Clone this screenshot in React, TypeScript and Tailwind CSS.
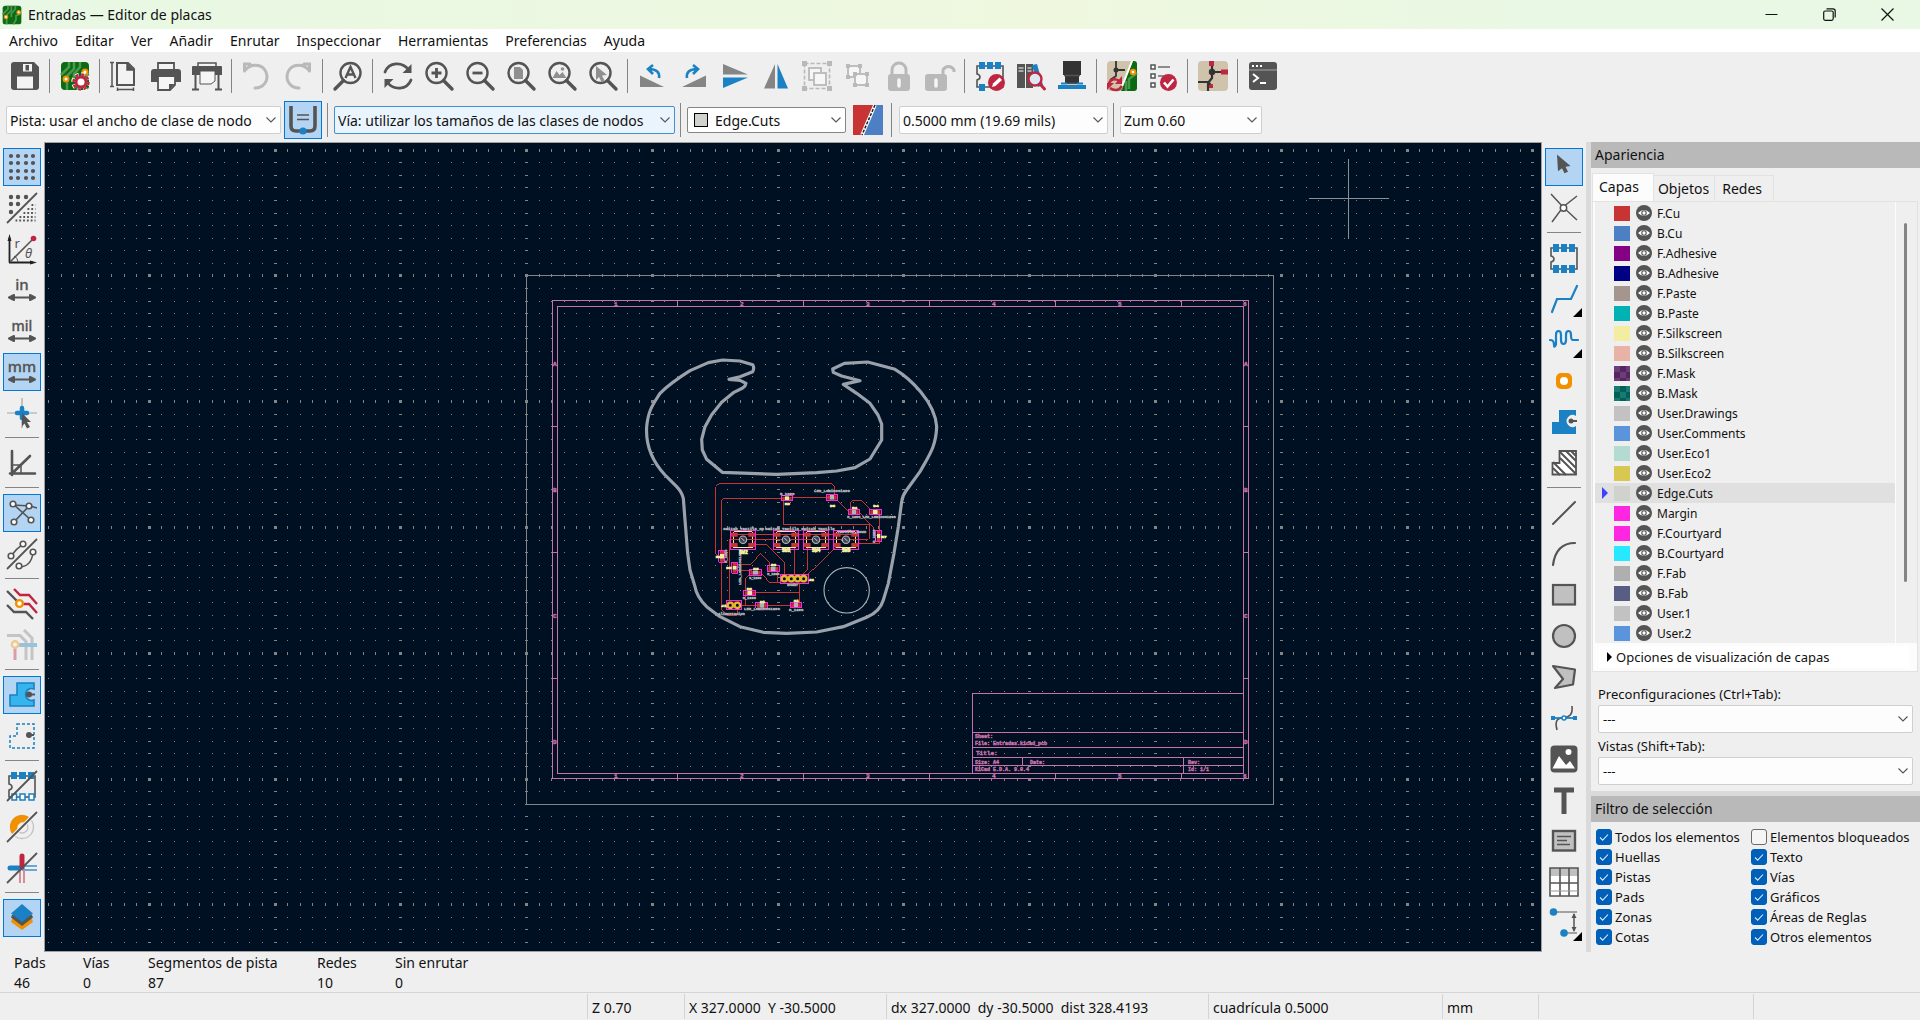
import React, { useState } from 'react';
import type { ReactNode } from 'react';

const G = '#545454';
const B = '#1a81c4';
const R = '#bf2641';
const O = '#f29100';
const D = '#b9b9b9';

const lens = (
  <>
    <circle cx="12.5" cy="12" r="10" fill="none" stroke={G} strokeWidth="2.4" />
    <path d="M19.5 19.5L28 28" stroke={G} strokeWidth="3.4" strokeLinecap="round" />
  </>
);
const arrowH = <path d="M4 22.5h22M7 20l-5 2.5L7 25zM23 20l5 2.5-5 2.5z" stroke={G} strokeWidth="2" fill={G} strokeLinejoin="round" />;
const chip = <path d="M8 5H2v8c4 1 4 5 0 6v7h26V5H8" fill="none" stroke={G} strokeWidth="1.6" />;
const slash = <path d="M1 29L29 1" stroke="#efefef" strokeWidth="4" />;
const slash2 = <path d="M0 30L30 0" stroke={G} strokeWidth="1.8" />;
const word = (s: string) => (
  <text x="15" y="15" textAnchor="middle" fontSize={s === 'mil' ? 14 : 15} fontFamily="Noto Sans" fontWeight="500" fill={G} stroke={G} strokeWidth="0.3">
    {s}
  </text>
);
const board = (
  <>
    <rect x="1" y="1" width="28" height="28" rx="4" fill="#0b6a12" />
    <path d="M9 1v5l-8 8M14 1v7l-7 7v14M20 1v5l-6 7v5M29 13l-8 3v6l-4 7" fill="none" stroke="#48984d" strokeWidth="2.6" />
    <circle cx="6" cy="18" r="2.5" fill="#fff" stroke={O} strokeWidth="2" />
    <circle cx="25" cy="11" r="2.5" fill="#fff" stroke={O} strokeWidth="2" />
  </>
);

const ICONS: Record<string, ReactNode> = {
  save: (
    <>
      <path d="M4 1h20l5 5v20a3 3 0 0 1-3 3H4a3 3 0 0 1-3-3V4a3 3 0 0 1 3-3z" fill={G} />
      <path d="M7 15.500h16v12H7zM13 3h9v7.500h-9z" fill="#f4f4f4" />
      <path d="M15.500 4h3.500v5.500h-3.500z" fill={G} />
    </>
  ),
  setup: (
    <>
      {board}
      <circle cx="21" cy="21" r="7.500" fill="none" stroke="#fff" strokeWidth="4.500" strokeDasharray="3.400 2.490" />
      <circle cx="21" cy="21" r="5" fill="#fff" stroke={R} strokeWidth="3" />
      <circle cx="21" cy="21" r="7.500" fill="none" stroke={R} strokeWidth="2.600" strokeDasharray="3 2.890" />
    </>
  ),
  page: (
    <>
      <path d="M7 2h11l6 6v16H7z" fill="#f3f3f3" stroke={G} strokeWidth="2" />
      <path d="M17 2v7h7" fill={G} stroke={G} strokeWidth="1.500" />
      <path d="M2 1v25M0 1.500h4M0 25.500h4M7 28.500h17M7.500 26.500v3.500M23.500 26.500v3.500" stroke={G} strokeWidth="1.500" />
    </>
  ),
  print: (
    <>
      <path d="M7 8V2h16v6" fill="#f3f3f3" stroke={G} strokeWidth="1.800" />
      <path d="M3 8h24a3 3 0 0 1 3 3v10H0V11a3 3 0 0 1 3-3z" fill={G} />
      <path d="M7 15h17v9l-5 5H7z" fill="#f6f6f6" stroke={G} strokeWidth="1.800" />
      <path d="M24 23h-6v6z" fill={G} />
    </>
  ),
  plot: (
    <>
      <path d="M6 5V2h18v3" fill="#f3f3f3" stroke={G} strokeWidth="1.500" />
      <path d="M1 5h28a1 1 0 0 1 1 1v8H0V6a1 1 0 0 1 1-1z" fill={G} />
      <path d="M8 10h15v10l-4 3H8z" fill="#f6f6f6" stroke={G} strokeWidth="1" />
      <path d="M3.500 13v15M26.500 13v15M0 28.500h7M23 28.500h7" stroke={G} strokeWidth="2" />
    </>
  ),
  undo: <path d="M9 3H3.500v7M4 9.500C9 2.500 21 2 25 11c3.500 9-3 16-11 16" fill="none" stroke={D} strokeWidth="3" strokeLinecap="round" transform="translate(-1 0)" />,
  redo: <path d="M21 3h5.500v7M26 9.500C21 2.500 9 2 5 11c-3.500 9 3 16 11 16" fill="none" stroke={D} strokeWidth="3" strokeLinecap="round" />,
  find: (
    <>
      <circle cx="17.500" cy="12" r="10" fill="none" stroke={G} strokeWidth="2.400" />
      <path d="M10.500 19.500L2 28" stroke={G} strokeWidth="3.400" strokeLinecap="round" />
      <path d="M12.500 17l5-11 5 11M14.500 13.500h6" fill="none" stroke={G} strokeWidth="2.400" />
    </>
  ),
  refresh: (
    <>
      <path d="M2 11C6 1 19 0 26 9M28 19C24 29 11 30 4 21" fill="none" stroke={G} strokeWidth="2.800" strokeLinecap="round" />
      <path d="M28.500 3v9h-9zM1.500 27v-9h9z" fill={G} />
    </>
  ),
  zin: <>{lens}<path d="M12.500 7v10M7.500 12h10" stroke={G} strokeWidth="2.800" /></>,
  zout: <>{lens}<path d="M7.500 12h10" stroke={G} strokeWidth="2.800" /></>,
  zfit: <>{lens}<path d="M8 6h6l3 3v9H8z" fill="#8f8f8f" /></>,
  zobj: <>{lens}<path d="M5.500 17l4-7 3 4 3-3 4 6z" fill="#8f8f8f" /><circle cx="15.500" cy="8" r="1.800" fill="#8f8f8f" /></>,
  zsel: <>{lens}<path d="M8 5l11 9-5 .5 2.500 5-3 1.500-2.500-5-3 3z" fill="#8f8f8f" /></>,
  ccw: <><path d="M2 14.500v11.500h24z" fill="#858585" /><path d="M21 17c1-6-3-9-10-9M15 4l-5 4 5 5" fill="none" stroke={B} strokeWidth="2.600" /></>,
  cw: <><path d="M27 14.500v11.500H3z" fill="#858585" /><path d="M8 17c-1-6 3-9 10-9M14 4l5 4-5 5" fill="none" stroke={B} strokeWidth="2.600" /></>,
  flipv: <><path d="M3 3v10.500h25z" fill="#858585" /><path d="M3 27V16.500h25z" fill={B} /></>,
  fliph: <><path d="M3 27.500h11V3z" fill="#858585" /><path d="M27 27.500H16.500V3z" fill={B} /></>,
  group: (
    <>
      <rect x="2.500" y="2.500" width="25" height="25" fill="none" stroke={D} strokeWidth="1.600" strokeDasharray="4 2" />
      <path d="M0 0h5v5H0zM25 0h5v5h-5zM0 25h5v5H0zM25 25h5v5h-5z" fill={D} />
      <rect x="7" y="7" width="12" height="12" fill="#f6f6f6" stroke={D} strokeWidth="1.800" />
      <rect x="12" y="12" width="12" height="12" fill="#f6f6f6" stroke={D} strokeWidth="1.800" />
    </>
  ),
  ungroup: (
    <>
      <rect x="5" y="5" width="12" height="11" fill="#f6f6f6" stroke={D} strokeWidth="1.800" />
      <rect x="12" y="13" width="12" height="11" fill="#f6f6f6" stroke={D} strokeWidth="1.800" />
      <path d="M3 3h4v4H3zM15 3h4v4h-4zM3 14h4v4H3zM10 11h4v4h-4zM22 11h4v4h-4zM10 22h4v4h-4zM22 22h4v4h-4z" fill={D} />
    </>
  ),
  lock: (
    <>
      <path d="M8 14V9a7 7 0 0 1 14 0v5" fill="none" stroke={D} strokeWidth="3" />
      <rect x="4" y="13" width="22" height="17" rx="3" fill={D} />
      <path d="M15 19v6" stroke="#f6f6f6" strokeWidth="3.500" strokeLinecap="round" />
    </>
  ),
  unlock: (
    <>
      <path d="M18 14V9a6 6 0 0 1 11 0v2" fill="none" stroke={D} strokeWidth="3" />
      <rect x="0" y="13" width="22" height="17" rx="3" fill={D} />
      <path d="M11 19v6" stroke="#f6f6f6" strokeWidth="3.500" strokeLinecap="round" />
    </>
  ),
  fpedit: (
    <>
      {chip}
      <path d="M4 1h6v7H4zM12 1h6v7h-6zM20 1h6v7h-6zM4 23h6v7H4z" fill={B} />
      <circle cx="21.500" cy="21.500" r="8.500" fill={R} />
      <path d="M17 26l1-3.500 6.500-6 2.500 2.500-6.500 6z" fill="#fff" />
    </>
  ),
  fplib: (
    <>
      <path d="M1 3h8v24H1zM10 3h7v24h-7z" fill={G} />
      <path d="M2.500 7h5M2.500 10h5M11.500 7h4M11.500 10h4" stroke="#fff" />
      <path d="M16 4l5-1 6 21-5 2z" fill={B} />
      <circle cx="19" cy="18" r="6.500" fill="#dbe9f2" stroke={R} strokeWidth="2.400" />
      <path d="M24 23l4.500 5" stroke={R} strokeWidth="3" strokeLinecap="round" />
    </>
  ),
  view3d: (
    <>
      <path d="M6 0h18v14H6zM8 15h14v7H8z" fill="#333" />
      <path d="M7 14.500h16M10 22.500h10" stroke={G} strokeWidth="1.500" />
      <path d="M1 24h28v4H1z" fill={B} />
      <path d="M4 22.500h6M20 22.500h6" stroke={B} strokeWidth="2" />
    </>
  ),
  update: (
    <>
      <rect x="0" y="0" width="30" height="30" rx="4" fill="#d0c3ab" />
      <path d="M14 30L26 0h1a3 3 0 0 1 3 3v24a3 3 0 0 1-3 3z" fill="#0b6a12" />
      <path d="M22 28V18l8-6M19 30V20" stroke="#48984d" strokeWidth="2.500" fill="none" />
      <path d="M9 0v15l-6 4M9 9h9" stroke="#333" strokeWidth="1.800" fill="none" />
      <circle cx="9" cy="9" r="2.500" fill="#333" />
      <circle cx="26" cy="11" r="2.300" fill="#fff" stroke={O} strokeWidth="2" />
      <path d="M14 28L25 0" stroke="#fff" strokeWidth="2" />
      <path d="M2 23c1-5 6-6 10-3M15 25c-3 5-8 5-12 2" stroke={R} strokeWidth="2.600" fill="none" />
      <path d="M15 15v8H8zM0 29v-7h7z" fill={R} />
    </>
  ),
  drc: (
    <>
      <path d="M3 4h4v4H3zM3 13h4v4H3zM3 22h4v4H3z" fill="#fff" stroke={G} strokeWidth="1.500" />
      <path d="M10 6h12M10 15h7" stroke="#8c8c8c" strokeWidth="2" />
      <circle cx="20.500" cy="21.500" r="8.500" fill={R} />
      <path d="M16 21.500l3.500 4 6-7" stroke="#fff" strokeWidth="2.600" fill="none" />
    </>
  ),
  sch: (
    <>
      <rect x="0" y="0" width="30" height="30" rx="4" fill="#d0c3ab" />
      <path d="M14 5v12l-4 5v8M14 11h10M11 21H0M11 22l3 4" stroke="#333" strokeWidth="2.200" fill="none" />
      <circle cx="14" cy="11" r="3.200" fill="#333" />
      <path d="M11 0h5v5h-5zM23 8.500h7v5h-7zM11 24l4-1v4h-4z" fill={R} />
    </>
  ),
  console: (
    <>
      <rect x="1" y="1" width="28" height="28" rx="3" fill={G} />
      <path d="M1 9h28" stroke="#8b8b8b" strokeWidth="1.500" />
      <path d="M4 5h2M8 5h2M12 5h2" stroke="#fff" strokeWidth="2" />
      <path d="M5 13l5 4-5 4M12 22h6" stroke="#fff" strokeWidth="2" fill="none" />
    </>
  ),
  autotrack: (
    <>
      <path d="M3 1v20q0 5 5 5h14q5 0 5-5V1" fill="none" stroke={G} strokeWidth="3.600" />
      <path d="M9 10h12M9 14.500h12" stroke={G} strokeWidth="1.600" />
      <circle cx="15" cy="26" r="3.600" fill={B} />
    </>
  ),
  swap: (
    <>
      <path d="M0 0h21L8 30H0z" fill="#c83434" />
      <path d="M23 0h7v30H10z" fill="#4d7fc4" />
      <path d="M22 0L9 30" stroke="#fff" strokeWidth="3.500" />
      <path d="M22 0L9 30" stroke="#222" strokeWidth="1.500" strokeDasharray="3 1.500" />
    </>
  ),
  grid: <path d="M4 4h.01M11 4h.01M19 4h.01M26 4h.01M4 11h.01M11 11h.01M19 11h.01M26 11h.01M4 19h.01M11 19h.01M19 19h.01M26 19h.01M4 26h.01M11 26h.01M19 26h.01M26 26h.01" stroke={G} strokeWidth="4.200" strokeLinecap="round" />,
  gridov: (
    <>
      <path d="M4 4h.01M11 4h.01M19 4h.01M4 11h.01M11 11h.01M4 19h.01" stroke={G} strokeWidth="4.400" strokeLinecap="round" />
      <path d="M28 8h.01M24.500 12h4M20.500 16h8M16.500 20h12M12.500 24h16M8.500 27.500h20" stroke={G} strokeWidth="1.800" strokeDasharray="1.800 2" />
      {slash2}
    </>
  ),
  polar: (
    <>
      <path d="M2.500 28.500V4M2 28.500h24" stroke="#222" strokeWidth="1.800" />
      <path d="M2.500 0l2 7h-4zM30 28.500l-7-2v4z" fill="#222" />
      <path d="M3 28L25 6" stroke={G} strokeWidth="1.600" />
      <path d="M7 22q4 2 4 6" stroke={G} fill="none" />
      <circle cx="26.500" cy="4.500" r="2.800" fill={R} />
      <text x="7.500" y="14" fontSize="13" fontFamily="Noto Sans" fill={G}>r</text>
      <text x="18" y="24" fontSize="13" fontFamily="Noto Sans" fontStyle="italic" fill={G}>θ</text>
    </>
  ),
  inch: <>{word('in')}{arrowH}</>,
  mil: <>{word('mil')}{arrowH}</>,
  mm: <>{word('mm')}{arrowH}</>,
  cursor: (
    <>
      <path d="M15 0v30M0 15h30" stroke="#a5a5a5" strokeWidth="1.200" />
      <path d="M15 10v10M10 15h10" stroke={B} strokeWidth="4.500" strokeLinecap="round" />
      <path d="M15 15l9 9h-4l3 5-3 1.500-2.500-5-2.500 3z" fill={G} />
    </>
  ),
  angle: <><path d="M5 3v24M3 25.500h25M5 25.500L23 8" stroke={G} strokeWidth="2.600" strokeLinecap="round" /><path d="M5 17h9v9" fill="none" stroke={G} strokeWidth="1.500" /></>,
  rats: (
    <>
      <path d="M6 6l18 16M22 8L7 24M6 7l17 1 7 2" stroke={G} strokeWidth="1.600" fill="none" />
      <g fill="#fff" stroke={G} strokeWidth="1.600"><circle cx="6" cy="6" r="2.800" /><circle cx="22" cy="8" r="2.800" /><circle cx="7" cy="24" r="2.800" /><circle cx="24" cy="22" r="2.800" /></g>
    </>
  ),
  ratcurve: (
    <>
      <path d="M4 18q5-9 12-12M12 28q12 0 14-14" stroke={G} strokeWidth="1.600" fill="none" />
      <g fill="#fff" stroke={G} strokeWidth="1.600"><circle cx="16" cy="5" r="2.800" /><circle cx="4" cy="17" r="2.800" /><circle cx="26" cy="13" r="2.800" /><circle cx="12" cy="27" r="2.800" /></g>
      {slash2}
    </>
  ),
  netcolor: (
    <>
      <path d="M0 2l10 10M0 16l7 7h12l7 7" stroke={G} strokeWidth="2.400" fill="none" />
      <path d="M7 0l6 6h9l8 9M13 15h9l8 9" stroke={R} strokeWidth="2.400" fill="none" />
      <circle cx="12.500" cy="14.500" r="3.400" fill="#fff" stroke={O} strokeWidth="2.400" />
    </>
  ),
  contrast: (
    <g opacity="0.4">
      <path d="M0 5.500h13l6 6V30M17 0l8 8v22" stroke="#858585" strokeWidth="3" fill="none" />
      <path d="M8 15h22" stroke={B} strokeWidth="4" />
      <path d="M8 17v13" stroke={R} strokeWidth="3" />
      <circle cx="8" cy="14.500" r="3.200" fill="#fff" stroke={O} strokeWidth="2.400" />
    </g>
  ),
  zonefill: (
    <>
      <path d="M10 3h17v6a6 6 0 1 0 0 11v6H3V15h7z" fill="#35b4ed" stroke={B} strokeWidth="1.600" />
      <circle cx="22" cy="14.500" r="3" fill={G} /><path d="M22 14.500h6" stroke={G} strokeWidth="2" />
    </>
  ),
  zoneout: (
    <>
      <path d="M10 3h17v24H3V15h7z" fill="none" stroke={B} strokeWidth="1.500" strokeDasharray="3 2" />
      <circle cx="22" cy="14" r="3" fill={G} /><path d="M22 14h5" stroke={G} strokeWidth="2" />
    </>
  ),
  padsk: (
    <>
      {chip}
      <path d="M4 1h6v7H4zM12 1h7v7h-7zM21 1h6v7h-6z" fill={B} />
      <path d="M5 23h4.500v6H5zM13 23h5v6h-5zM22 23h5v6h-5z" fill="#fff" stroke={B} strokeWidth="1.500" />
      {slash2}
    </>
  ),
  viask: (
    <>
      <circle cx="15" cy="15" r="11.500" fill="none" stroke="#c2c2c2" strokeWidth="1.300" />
      <circle cx="15" cy="15" r="6" fill="none" stroke="#c2c2c2" strokeWidth="1.300" />
      <path d="M6.500 23.500a12 12 0 0 1 17-17l-5 5a5 5 0 0 0-7 7z" fill={O} />
      {slash}{slash2}
    </>
  ),
  tracksk: (
    <>
      <path d="M13 15v15M17 15v15" stroke="#d77f8f" strokeWidth="1.800" />
      <path d="M15 13h15M15 17h15" stroke="#66a9d6" strokeWidth="1.800" />
      <path d="M3 15h10" stroke={B} strokeWidth="5" strokeLinecap="round" />
      <path d="M15 3v11" stroke={R} strokeWidth="5" strokeLinecap="round" />
      {slash2}
    </>
  ),
  layers: (
    <>
      <path d="M4 19l11 8 11-8-1-3H5z" fill={O} />
      <path d="M4 14.500l11 8.500 11-8.500-1-2.500H5z" fill={G} />
      <path d="M15 1l11 9.500-11 8.500L4 10.500z" fill={B} />
    </>
  ),
  select: <path d="M8 2.500L21.500 14l-5 .8 2.500 5-3.500 1.500-2.500-5-4 3z" fill={G} />,
  hilite: <><path d="M2 1l12 13L28 3M3 29l11-15 14 13" fill="none" stroke={G} strokeWidth="1.500" /><circle cx="14.500" cy="15" r="3.200" fill="#fff" stroke={G} strokeWidth="1.500" /></>,
  footprint: <>{chip}<path d="M4 1h6v8H4zM12 1h6v8h-6zM20 1h6v8h-6zM4 22h6v8H4zM12 22h6v8h-6zM20 22h6v8h-6z" fill={B} /></>,
  track: <path d="M3 28l5-13h14l6-13" fill="none" stroke={B} strokeWidth="2.200" strokeLinecap="round" />,
  tune: <path d="M1 15q4 0 4 4.500t2 0V10q0-4 2.500-4t2.500 4v5q0 4 2.500 4T17 15v-5q0-4 2.500-4T22 10q0 5 2 5h5" fill="none" stroke={B} strokeWidth="2.200" strokeLinecap="round" />,
  via: <><rect x="7" y="7" width="16" height="16" rx="5" fill={O} /><circle cx="15" cy="15" r="4" fill="#fff" /></>,
  zone: <><path d="M10 3h17v6a6 6 0 1 0 0 10v8H3V15h7z" fill={B} /><circle cx="22" cy="14" r="2.500" fill={G} /><path d="M22 14h6" stroke={G} strokeWidth="2" /></>,
  rule: <><path d="M10.500 3h16.500v23.500H3.500V15h7z" fill="#fff" stroke={G} strokeWidth="1.800" /><path d="M4 20l7 7M4 14l13 13M11 10l16 16M11 4l16 16M17 3l10 10M22 3l5 5" stroke={G} strokeWidth="2" /></>,
  line: <path d="M4 26L26 4" stroke={G} strokeWidth="2" strokeLinecap="round" />,
  arc: <path d="M4 26C6 11 14 4 26 4" fill="none" stroke={G} strokeWidth="2.200" strokeLinecap="round" />,
  rect: <rect x="4" y="5" width="22" height="19.500" fill="#c0c0c0" stroke={G} strokeWidth="2.200" />,
  circle: <circle cx="15" cy="15" r="11" fill="#c0c0c0" stroke={G} strokeWidth="2.200" />,
  poly: <path d="M4 4l22 3.500-2 15L6 26l8-9z" fill="#c0c0c0" stroke={G} strokeWidth="2.200" strokeLinejoin="round" />,
  bezier: <><path d="M8 27C5 16 10 15 15 14.500S24 12 23 3" fill="none" stroke={G} strokeWidth="1.600" /><path d="M3 15h24" stroke={B} strokeWidth="1.800" /><path d="M2 13h4v4H2zM24 13h4v4h-4z" fill={B} /><circle cx="15" cy="15" r="2" fill="#fff" stroke={B} strokeWidth="1.500" /></>,
  image: <><rect x="1.500" y="1.500" width="27" height="27" rx="4" fill={G} /><path d="M3.500 24.500L10 12l7 9 4-4 5 7.500z" fill="#fff" /><circle cx="19.500" cy="8" r="3" fill="#fff" /></>,
  text: <path d="M5 5h20M15 5v24" stroke={G} strokeWidth="5" />,
  textbox: <><rect x="4" y="5" width="22" height="19.500" fill="#c0c0c0" stroke={G} strokeWidth="2.400" /><path d="M8 10.500h14M8 14.500h10M8 18.500h13" stroke={G} strokeWidth="1.600" /></>,
  table: <><rect x="1" y="1" width="28" height="28" fill="#fff" /><path d="M1 1h28v8H1z" fill="#c0c0c0" /><path d="M1 16h28M11 1v28M20 1v28M1 1h28v28H1z" fill="none" stroke={G} strokeWidth="1.600" /><path d="M1 24h28" stroke="#999" /></>,
  dim: <><path d="M5 4h23M15 25h13" stroke={G} strokeWidth="1.200" /><path d="M25 6v17" stroke={G} strokeWidth="1.500" /><path d="M25 5l2.500 5h-5zM25 24l2.500-5h-5z" fill={G} /><circle cx="4.500" cy="4" r="3.800" fill={B} /><circle cx="15" cy="25" r="3.800" fill={B} /></>,
};

function Icon({ n }: { n: string }) {
  return (
    <svg viewBox="0 0 30 30" className="h-[30px] w-[30px] overflow-visible" aria-hidden="true">
      {ICONS[n]}
    </svg>
  );
}

const TOP: (string | null)[] = ['save', null, 'setup', null, 'page', 'print', 'plot', null, 'undo', 'redo', null, 'find', null, 'refresh', 'zin', 'zout', 'zfit', 'zobj', 'zsel', null, 'ccw', 'cw', 'flipv', 'fliph', 'group', 'ungroup', 'lock', 'unlock', null, 'fpedit', 'fplib', 'view3d', null, 'update', 'drc', null, 'sch', null, 'console'];
const LEFT: (string | null)[] = ['grid', 'gridov', 'polar', 'inch', 'mil', 'mm', 'cursor', null, 'angle', null, 'rats', 'ratcurve', null, 'netcolor', 'contrast', null, 'zonefill', 'zoneout', null, 'padsk', 'viask', 'tracksk', null, 'layers'];
const LEFT_ON = ['grid', 'mm', 'rats', 'zonefill', 'layers'];
const RIGHT: (string | null)[] = ['select', 'hilite', null, 'footprint', 'track', 'tune', 'via', 'zone', 'rule', null, 'line', 'arc', 'rect', 'circle', 'poly', 'bezier', 'image', 'text', 'textbox', 'table', 'dim'];
const RIGHT_MORE = ['track', 'tune', 'dim'];

function SideBar({ items, on, more = [], label }: { items: (string | null)[]; on: string[]; more?: string[]; label: string }) {
  return (
    <div role="toolbar" aria-label={label} aria-orientation="vertical" className="flex w-11 shrink-0 flex-col items-center gap-[3px] bg-[#efefef] pt-1.5">
      {items.map((n, i) =>
        n === null ? (
          <div key={i} className="flex h-1.5 w-[34px] items-start pt-0.5"><div className="h-px w-full bg-[#858585]" /></div>
        ) : (
          <button
            key={i}
            type="button"
            aria-label={n}
            className={`relative flex h-[38px] w-[38px] shrink-0 items-center justify-center border ${on.includes(n) ? 'border-[#0078d7] bg-[#b3d5f3]' : 'border-transparent'}`}
          >
            <Icon n={n} />
            {more.includes(n) && (
              <svg viewBox="0 0 9 9" className="absolute right-0 bottom-0 h-[9px] w-[9px]"><path d="M9 0v9H0z" /></svg>
            )}
          </button>
        ),
      )}
    </div>
  );
}

function Chevron() {
  return (
    <svg viewBox="0 0 10 6" className="pointer-events-none absolute top-1/2 right-[5px] h-1.5 w-2.5 -translate-y-1/2" aria-hidden="true">
      <path d="M0.500 0.500L5 5 9.500 0.500" fill="none" stroke="#555" strokeWidth="1.100" />
    </svg>
  );
}

function Combo({ label, value, box, field = 'border-[#cfcfcf] bg-[#fdfdfd] pl-[3px]', children }: { label: string; value: string; box: string; field?: string; children?: ReactNode }) {
  return (
    <div className={`relative ${box}`}>
      <select aria-label={label} className={`h-full w-full appearance-none rounded-[2px] border pt-px ${field}`}>
        <option>{value}</option>
      </select>
      {children}
      <Chevron />
    </div>
  );
}

const VSep = ({ box }: { box: string }) => <div className={`flex shrink-0 justify-center ${box}`}><div className="h-[34px] w-px bg-[#858585]" /></div>;

/* ---------- board canvas ---------- */
const STEP = 12.577;
const gridPath = (() => {
  let d = '';
  for (let i = -8; i <= 240; i++) {
    for (let j = 0; j <= 120; j++) {
      const x = Math.floor(149.3 + i * STEP);
      const y = Math.floor(150.2 + j * STEP);
      if (x < 45) continue;
      const mx = i % 10 === 0;
      const my = j % 10 === 0;
      const w = mx ? 3 : 1;
      const h = my ? 3 : 1;
      d += `M${mx ? x - 1 : x} ${my ? y - 1 : y}h${w}v${h}h${-w}z`;
    }
  }
  return d;
})();

function Caption({ x, y, s, c = '#b0b3b8', size = 12, w = 1.2 }: { x: number; y: number; s: string; c?: string; size?: number; w?: number }) {
  return <text x={x} y={y} fontSize={size} fontWeight="bold" fontFamily="Liberation Mono" fill={c} stroke={c} strokeWidth={w}>{s}</text>;
}

function SheetText({ x, y, s, size = 5 }: { x: number; y: number; s: string; size?: number }) {
  return <Caption x={x} y={y} s={s} c="#c872ab" size={size} w={0.4} />;
}

const SMALL: [number, number, number, number][] = [
  [424, 467, 34, 15], [559, 463, 34, 18], [625, 508, 34, 17], [688, 508, 36, 17], [708, 571, 16, 34], [237, 631, 18, 36],
  [275, 667, 18, 33], [328, 690, 37, 16], [382, 678, 36, 17], [311, 751, 36, 16], [348, 787, 35, 18], [451, 787, 34, 16],
];
const SWITCHES = [271, 400, 490, 580];
const TRACES =
  'M240 655L227 640V440L238 430H575L583 440V465M245 635V480L250 476H430M455 472H565M430 480V553H690V592L685 598H350L340 610M592 480L625 515M632 510V488L638 481H665L692 508M655 515L700 562V575L712 590M718 520V575M718 605V612H655M290 583H650M345 614H380L433 667V705M463 625V705M502 625V690L490 702M590 620L502 705M268 790V600L272 595M245 660V810L262 826H292V800M285 673H333L361 641 388 667V680M285 691H335M365 700L388 727H430M412 690V727M335 698L316 716V752M316 765V795M340 757H478M478 725V790M300 796H455';
const OUTLINE =
  'M248 60L300 63 338 74Q344 84 338 95L300 110 267 118 300 121 318 130Q317 138 308 144L280 158 245 187 215 224 195 260 185 298 187 330 200 358 247 397 410 403 530 398 590 393 645 383 690 357 725 300 725 252 714 225 690 190 650 160 610 133 660 122 605 108 580 97 578 87 613 70 683 66 765 88C810 115 885 185 890 260C888 320 868 345 840 395L800 450Q788 465 785 485L775 560 762 640 745 730 730 780Q720 815 680 832L610 860 530 876 440 880 370 877 300 860 240 830 200 800Q170 770 165 740L150 690 143 640 135 540 130 475Q125 455 110 440L75 405Q15 340 20 260C25 210 38 195 60 160Q90 130 150 92L205 68Z';

function Canvas() {
  return (
    <div className="min-w-0 flex-1 overflow-hidden border border-[#a0a0a0] bg-[#001023]">
      <svg className="block h-full w-full" role="img" aria-label="Placa">
        <g transform="translate(-45 -143)">
          <path d={gridPath} fill="#848484" shapeRendering="crispEdges" />
          <path d="M526.500 275.500h747v529h-747z" fill="none" stroke="#848484" shapeRendering="crispEdges" />
          <path
            d="M552.500 300.500h696v478h-696zM557.500 306.500h686v467h-686zM677.500 300v6M803.500 300v6M929.500 300v6M1055.500 300v6M1181.500 300v6M677.500 773v6M803.500 773v6M929.500 773v6M1055.500 773v6M1181.500 773v6M552 426.500h6M552 552.500h6M552 678.500h6M1243 426.500h6M1243 552.500h6M1243 678.500h6M1243 693.500H972.500V773M972 732.500h271M972 747.500h271M972 757.500h271M972 765.500h271M1022.500 757v8M1183.500 757v16"
            fill="none" stroke="#c872ab" shapeRendering="crispEdges"
          />
          {['1', '2', '3', '4', '5', '6'].map((s, i) => (
            <g key={s}>
              <SheetText x={i === 5 ? 1243 : 614 + i * 126} y={306} s={s} size={6} />
              <SheetText x={i === 5 ? 1243 : 614 + i * 126} y={778} s={s} size={6} />
            </g>
          ))}
          {['A', 'B', 'C', 'D'].map((s, i) => (
            <g key={s}>
              <SheetText x={553} y={366 + i * 126} s={s} size={6} />
              <SheetText x={1244} y={366 + i * 126} s={s} size={6} />
            </g>
          ))}
          <SheetText x={975} y={738} s="Sheet:" />
          <SheetText x={975} y={745} s="File: Entradas.kicad_pcb" />
          <SheetText x={976} y={755} s="Title:" size={6} />
          <SheetText x={975} y={764} s="Size: A4" />
          <SheetText x={1030} y={764} s="Date:" />
          <SheetText x={1188} y={764} s="Rev:" />
          <SheetText x={975} y={771} s="KiCad E.D.A. 9.0.4" />
          <SheetText x={1188} y={771} s="Id: 1/1" />
          <path d="M1348.500 159v80M1309 198.500h80" stroke="#8b9098" shapeRendering="crispEdges" />
          <g transform="translate(640 340) scale(0.33333)">
            <path d={OUTLINE} fill="none" stroke="#9ba1aa" strokeWidth="9.500" strokeLinejoin="round" />
            <circle cx="620" cy="751" r="68" fill="none" stroke="#a7adaf" strokeWidth="3.500" />
            <path d={TRACES} fill="none" stroke="#c83434" strokeWidth="3" shapeRendering="crispEdges" />
            {SWITCHES.map((x) => (
              <g key={x}>
                <path d={`M${x + 10} 576h56v47h-56z`} fill="none" stroke="#f2eda1" strokeWidth="3" shapeRendering="crispEdges" />
                <path d={`M${x + 2} 578h20v12h-20zM${x + 54} 578h20v12h-20zM${x + 2} 609h20v12h-20zM${x + 54} 609h20v12h-20z`} fill="#c83434" />
                <path d={`M${x + 2} 583h72M${x + 2} 598h72`} stroke="#c83434" strokeWidth="3" shapeRendering="crispEdges" />
                <circle cx={x + 38} cy="599" r="11" fill="#3a434f" stroke="#b0b3b8" strokeWidth="3.500" />
                <path d={`M${x + 33} 594l10 10`} stroke="#d0d3d8" strokeWidth="3" />
                <path d={`M${x} 571h76v57h-76z`} fill="none" stroke="#ff26e2" strokeWidth="3" shapeRendering="crispEdges" />
              </g>
            ))}
            {SMALL.map(([x, y, w, h], i) =>
              w > h ? (
                <g key={i}>
                  <path d={`M${x + 3} ${y + 3}h8v${h - 5}h-8zM${x + w - 11} ${y + 3}h8v${h - 5}h-8z`} fill="#c83434" />
                  <path d={`M${x + 11} ${y + 2}h${w - 22}v${h - 4}h${22 - w}z`} fill={i % 3 ? '#b0b3b8' : '#f2eda1'} />
                  <path d={`M${x} ${y}h${w}v${h}h${-w}z`} fill="none" stroke="#ff26e2" strokeWidth="3" shapeRendering="crispEdges" />
                </g>
              ) : (
                <g key={i}>
                  <path d={`M${x + 3} ${y + 2}h${w - 6}v9h${6 - w}zM${x + 3} ${y + h - 11}h${w - 6}v9h${6 - w}z`} fill="#c83434" />
                  <path d={`M${x + 3} ${y + 11}h${w - 6}v${h - 22}h${6 - w}z`} fill="#f2eda1" />
                  <path d={`M${x} ${y}h${w}v${h}h${-w}z`} fill="none" stroke="#ff26e2" strokeWidth="3" shapeRendering="crispEdges" />
                </g>
              ),
            )}
            <path d="M421 703h85v27h-85zM259 781h46v27h-46z" fill="#3a1a2c" stroke="#ff26e2" strokeWidth="3" shapeRendering="crispEdges" />
            {[433, 454, 473, 491].map((x) => <circle key={x} cx={x} cy="716" r="8" fill="#001023" stroke="#e3b72e" strokeWidth="7" />)}
            {[271, 292].map((x) => <circle key={x} cx={x} cy="796" r="8" fill="#001023" stroke="#e3b72e" strokeWidth="7" />)}
            <Caption x={420} y={465} s="R_1206" />
            <Caption x={522} y={455} s="LED_Laminos1206" />
            <Caption x={622} y={535} s="R_1206_LED_Laminos1206" size={11} />
            <Caption x={250} y={570} s="Switch_Tactile_Op" />
            <Caption x={376} y={570} s="Switch_Tactile_Switch_Tactile" />
            <Caption x={592} y={579} s="Tactile_Down" />
            <Caption x={328} y={717} s="R_1206" size={10} />
            <Caption x={382} y={706} s="R_1206" size={10} />
            <Caption x={308} y={776} s="R_1206" size={11} />
            <Caption x={312} y={811} s="LED_Laminos1206" />
            <Caption x={447} y={813} s="R_1206" />
            <Caption x={442} y={739} s="Header" size={9} />
            <Caption x={235} y={824} s="Alimentacion" size={11} />
            <g transform="rotate(-90 302 735)"><Caption x={302} y={737} s="LED_Laminos1206" /></g>
            <g transform="rotate(-90 262 668)"><Caption x={262} y={668} s="R_1206" size={11} /></g>
            <g transform="rotate(-90 705 608)"><Caption x={705} y={608} s="R_1206" size={11} /></g>
            {([[434, 494, 'R3'], [570, 500, 'D3'], [636, 508, 'R4'], [700, 501, 'D4'], [340, 691, 'R5'], [393, 678, 'R6'], [320, 750, 'R2'], [360, 790, 'D1'], [461, 787, 'R1'], [724, 595, 'R7'], [227, 655, 'R8'], [506, 722, 'J2'], [244, 802, 'J1'], [259, 688, 'D5']] as [number, number, string][]).map(([x, y, s]) => (
              <Caption key={s} x={x} y={y} s={s} c="#f2eda1" size={13} w={2} />
            ))}
            {([[298, 643, 'SW2'], [426, 637, 'SW3'], [516, 637, 'SW4'], [606, 637, 'SW5']] as [number, number, string][]).map(([x, y, s]) => (
              <Caption key={s} x={x} y={y} s={s} c="#f2eda1" size={14} w={2} />
            ))}
          </g>
        </g>
      </svg>
    </div>
  );
}

/* ---------- right panel ---------- */
const LAYERS: [string, string][] = [
  ['F.Cu', 'bg-[#c83434]'], ['B.Cu', 'bg-[#4d7fc4]'], ['F.Adhesive', 'bg-[#840084]'], ['B.Adhesive', 'bg-[#000084]'],
  ['F.Paste', 'bg-[#a4958e]'], ['B.Paste', 'bg-[#00b2b1]'], ['F.Silkscreen', 'bg-[#f2eda1]'], ['B.Silkscreen', 'bg-[#e8b2a7]'],
  ['F.Mask', 'bg-[conic-gradient(#55265f_25%,#6c3d78_0_50%,#55265f_0_75%,#6c3d78_0)] bg-[length:12px_12px]'],
  ['B.Mask', 'bg-[conic-gradient(#02605a_25%,#1a7a70_0_50%,#02605a_0_75%,#1a7a70_0)] bg-[length:12px_12px]'],
  ['User.Drawings', 'bg-[#c2c2c2]'], ['User.Comments', 'bg-[#5994dc]'], ['User.Eco1', 'bg-[#b4dbd2]'], ['User.Eco2', 'bg-[#d8c852]'],
  ['Edge.Cuts', 'bg-[#d0d2cd]'], ['Margin', 'bg-[#ff26e2]'], ['F.Courtyard', 'bg-[#ff26e2]'], ['B.Courtyard', 'bg-[#26e9ff]'],
  ['F.Fab', 'bg-[#afafaf]'], ['B.Fab', 'bg-[#585d84]'], ['User.1', 'bg-[#c2c2c2]'], ['User.2', 'bg-[#5994dc]'],
];

const FILTERS = ['Todos los elementos', 'Elementos bloqueados', 'Huellas', 'Texto', 'Pistas', 'Vías', 'Pads', 'Gráficos', 'Zonas', 'Áreas de Reglas', 'Cotas', 'Otros elementos'];

function Eye() {
  return (
    <svg viewBox="0 0 16 16" className="h-4 w-4" aria-hidden="true">
      <circle cx="8" cy="8" r="8" fill={G} />
      <path d="M2 8Q8 2 14 8 8 14 2 8z" fill="#fff" />
      <circle cx="8" cy="8" r="2.200" fill="#fff" stroke={G} strokeWidth="1.100" />
    </svg>
  );
}

function Panel() {
  const [active, setActive] = useState('Edge.Cuts');
  return (
    <aside className="flex w-[329px] shrink-0 flex-col bg-[#efefef]">
      <h2 className="h-[26px] bg-[#b9b9b9] pl-1 leading-[26px]">Apariencia</h2>
      <div role="tablist" className="mt-[5px] ml-px flex h-7 items-end">
        <button type="button" role="tab" aria-selected="true" className="h-7 border border-b-0 border-[#e2e2e2] bg-[#fcfcfc] pr-[14px] pb-0.5 pl-1.5">Capas</button>
        <button type="button" role="tab" aria-selected="false" className="h-[26px] border-t border-r border-[#e2e2e2] pr-[5px] pl-1">Objetos</button>
        <button type="button" role="tab" aria-selected="false" className="h-[26px] border-t border-r border-[#e2e2e2] pr-[11px] pl-[7px]">Redes</button>
      </div>
      <div className="mr-0.5 ml-px border border-[#e2e2e2] bg-[#fcfcfc] pl-0.5">
        <div className="flex bg-[#efefef]">
          <ul className="flex-1 pt-px text-xs">
            {LAYERS.map(([name, color]) => (
              <li key={name} className={`flex h-5 items-center pl-[7px] ${active === name ? 'bg-[#e0e0e0]' : ''}`}>
                <span className="flex w-3">
                  {active === name && <svg viewBox="0 0 6 12" className="h-3 w-1.5"><path d="M0 0l6 6-6 6z" fill="#4040ff" /></svg>}
                </span>
                <span className={`h-[15px] w-4 ${color}`} />
                <button type="button" aria-label={`Visibilidad ${name}`} className="ml-1.5"><Eye /></button>
                <button type="button" className="ml-[5px] pt-0.5" onClick={() => setActive(name)}>{name}</button>
              </li>
            ))}
          </ul>
          <div className="flex w-[22px] flex-col border-l border-[#fcfcfc]">
            <div className="mt-[21px] ml-2 h-[359px] w-[3px] rounded-full bg-[#858585]" />
          </div>
        </div>
        <button type="button" className="mt-[3px] mb-[3px] ml-1 flex h-[22px] w-[311px] items-center gap-1 bg-white pl-2 text-[13px]">
          <svg viewBox="0 0 5 10" className="h-2.5 w-[5px]"><path d="M0 0l5 5-5 5z" /></svg>
          Opciones de visualización de capas
        </button>
      </div>
      <div className="flex flex-col px-[7px] pt-3 pb-1.5 text-[13px]">
        <label htmlFor="presets" className="h-[21px] leading-[20px]">Preconfiguraciones (Ctrl+Tab):</label>
        <div className="relative h-7">
          <select id="presets" className="h-full w-full appearance-none rounded-[2px] border border-[#cfcfcf] bg-[#fdfdfd] pl-1"><option>---</option></select>
          <Chevron />
        </div>
        <label htmlFor="views" className="mt-[3px] h-[21px] leading-[20px]">Vistas (Shift+Tab):</label>
        <div className="relative h-7">
          <select id="views" className="h-full w-full appearance-none rounded-[2px] border border-[#cfcfcf] bg-[#fdfdfd] pl-1"><option>---</option></select>
          <Chevron />
        </div>
      </div>
      <div className="h-[5px] bg-[#dadada]" />
      <h2 className="h-[26px] bg-[#b9b9b9] pl-1 leading-[26px]">Filtro de selección</h2>
      <div className="grid grid-cols-[155px_1fr] pt-[5px] pl-[5px] text-[13px]">
        {FILTERS.map((f) => (
          <label key={f} className="relative flex h-5 items-center gap-[3px] whitespace-nowrap">
            <input type="checkbox" defaultChecked={f !== 'Elementos bloqueados'} className="peer h-4 w-4 shrink-0 appearance-none rounded-[3px] border border-[#6a6a6a] bg-[#f5f5f5] checked:border-[#005fb8] checked:bg-[#005fb8]" />
            <svg viewBox="0 0 16 16" className="pointer-events-none invisible absolute left-0 h-4 w-4 peer-checked:visible"><path d="M4 8.500l2.700 2.700L12 5.500" fill="none" stroke="#dcecfa" strokeWidth="1.100" /></svg>
            {f}
          </label>
        ))}
      </div>
    </aside>
  );
}

export default function App() {
  return (
    <div className="flex h-screen flex-col overflow-hidden bg-[#efefef] font-['Noto_Sans','Open_Sans',sans-serif] text-sm text-[#111]">
      <header className="flex h-[29px] shrink-0 items-center bg-[linear-gradient(90deg,#e8f8e4,#eff8df_55%,#e9f8e4_80%)]">
        <svg viewBox="0 0 30 30" className="ml-0.5 h-5 w-5">{board}</svg>
        <h1 className="ml-1.5 flex-1">Entradas — Editor de placas</h1>
        <button type="button" aria-label="Minimizar" className="flex w-[58px] justify-center"><svg viewBox="0 0 13 13" className="h-[13px] w-[13px]"><path d="M0.500 6.500h12" stroke="#111" /></svg></button>
        <button type="button" aria-label="Restaurar" className="flex w-[58px] justify-center"><svg viewBox="0 0 13 13" className="h-[13px] w-[13px]"><path d="M3.500 0.800h6.500q2.200 0 2.200 2.200v6.500" fill="none" stroke="#111" strokeWidth="1.200" /><rect x="0.700" y="3" width="9.500" height="9.300" rx="1.500" fill="none" stroke="#111" strokeWidth="1.200" /></svg></button>
        <button type="button" aria-label="Cerrar" className="mr-1 flex w-[58px] justify-center"><svg viewBox="0 0 13 13" className="h-[13px] w-[13px]"><path d="M0.500 0.500l12 12M12.500 0.500l-12 12" stroke="#111" strokeWidth="1.200" /></svg></button>
      </header>
      <nav className="flex h-[23px] shrink-0 items-center gap-px bg-white pt-px pl-px">
        {['Archivo', 'Editar', 'Ver', 'Añadir', 'Enrutar', 'Inspeccionar', 'Herramientas', 'Preferencias', 'Ayuda'].map((m) => (
          <button key={m} type="button" className="px-2">{m}</button>
        ))}
      </nav>
      <div role="toolbar" aria-label="Principal" className="flex h-12 shrink-0 items-center pl-1">
        {TOP.map((n, i) =>
          n === null ? <VSep key={i} box="w-[9px]" /> : (
            <button key={i} type="button" aria-label={n} className="flex w-[41px] shrink-0 justify-center"><Icon n={n} /></button>
          ),
        )}
      </div>
      <div role="toolbar" aria-label="Opciones" className="mb-0.5 flex h-10 shrink-0 items-center pl-1.5">
        <Combo label="Ancho de pista" value="Pista: usar el ancho de clase de nodo" box="h-7 w-[275px]" />
        <button type="button" aria-label="Ancho automático" className="ml-[3px] flex h-[38px] w-[38px] items-center justify-center border border-[#0078d7] bg-[#b3d5f3]"><Icon n="autotrack" /></button>
        <VSep box="ml-px w-[9px]" />
        <Combo label="Tamaño de vía" value="Vía: utilizar los tamaños de las clases de nodos" box="ml-0.5 h-7 w-[341px]" field="border-[#3f8fd2] bg-[#eaf4fc] pl-[3px]" />
        <VSep box="ml-px w-[9px]" />
        <Combo label="Capa activa" value="Edge.Cuts" box="ml-0.5 h-[26px] w-[159px]" field="border-[#858585] bg-white pl-[27px]">
          <span className="pointer-events-none absolute top-1/2 left-[7px] h-3.5 w-3.5 -translate-y-1/2 border border-black bg-[#d0d2cd]" />
        </Combo>
        <button type="button" aria-label="Par de capas" className="ml-[7px]"><Icon n="swap" /></button>
        <VSep box="ml-1 w-[9px]" />
        <Combo label="Rejilla" value="0.5000 mm (19.69 mils)" box="ml-[3px] h-7 w-[209px]" />
        <VSep box="ml-px w-[9px]" />
        <Combo label="Zum" value="Zum 0.60" box="ml-0.5 h-7 w-[142px]" />
      </div>
      <main className="flex min-h-0 flex-1">
        <SideBar items={LEFT} on={LEFT_ON} label="Opciones de vista" />
        <Canvas />
        <SideBar items={RIGHT} on={['select']} more={RIGHT_MORE} label="Herramientas" />
        <div className="w-[5px] shrink-0 bg-[#dadada]" />
        <Panel />
      </main>
      <dl className="flex h-[41px] shrink-0 border-b border-[#d4d4d4] pt-px pl-3.5 leading-5">
        {[['Pads', '46', 'w-[69px]'], ['Vías', '0', 'w-[65px]'], ['Segmentos de pista', '87', 'w-[169px]'], ['Redes', '10', 'w-[78px]'], ['Sin enrutar', '0', '']].map(([k, v, w]) => (
          <div key={k} className={w}>
            <dt>{k}</dt>
            <dd>{v}</dd>
          </div>
        ))}
      </dl>
      <footer className="flex h-[27px] shrink-0 py-px leading-[27px]">
        <div className="w-[587px]" />
        {[['Z 0.70', 'w-[97px]'], ['X 327.0000  Y -30.5000', 'w-[202px]'], ['dx 327.0000  dy -30.5000  dist 328.4193', 'w-[322px]'], ['cuadrícula 0.5000', 'w-[234px]'], ['mm', 'w-[96px]'], ['', 'w-[215px]'], ['', 'flex-1']].map(([t, w], i) => (
          <div key={i} className={`border-l border-[#d4d4d4] pl-1 whitespace-pre ${w}`}>{t}</div>
        ))}
      </footer>
    </div>
  );
}
